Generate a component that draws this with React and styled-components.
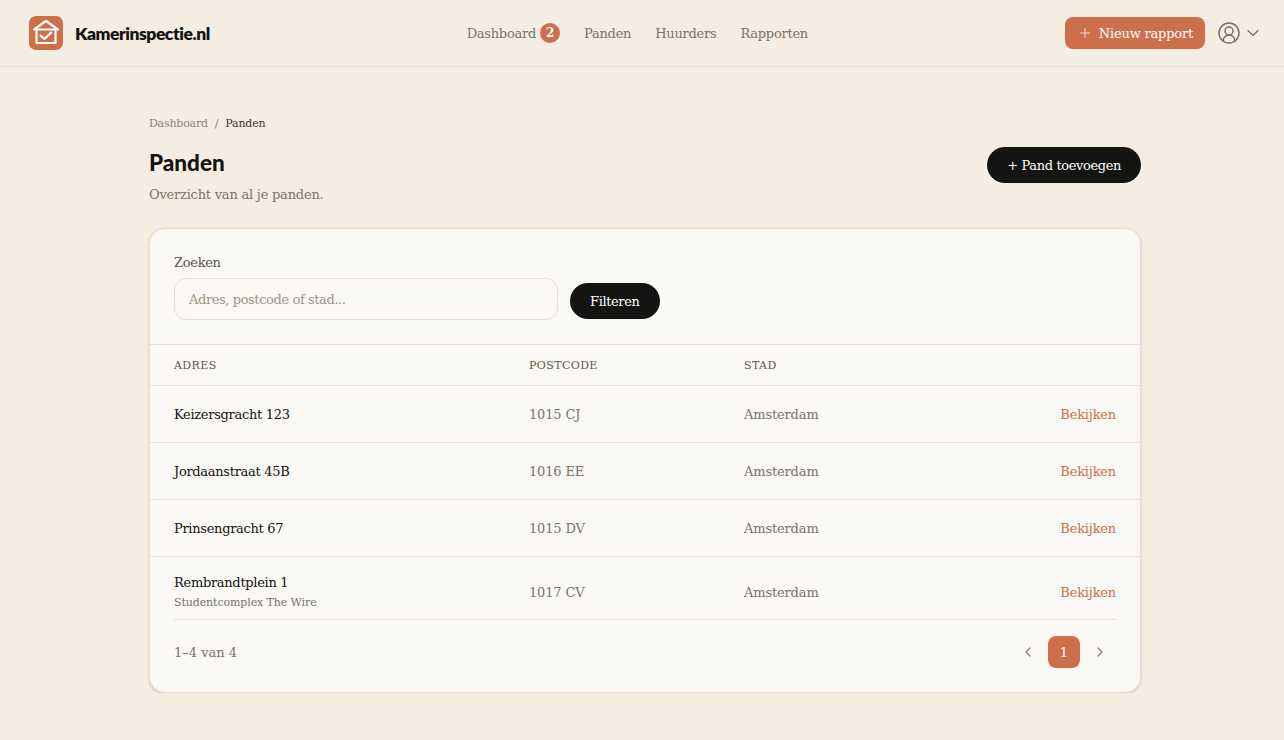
import React from "react";
import styled, { createGlobalStyle } from "styled-components";
import { ChevronLeft, ChevronRight, ChevronDown, Plus, CircleUserRound } from "lucide-react";

const bodyFont = `"DejaVu Serif", "Liberation Serif", serif`;
const headFont = `"Lato", "Open Sans", sans-serif`;

const GlobalStyle = createGlobalStyle`
  html, body {
    margin: 0;
    background: #f4ede2;
    font-family: ${bodyFont};
    color: #141412;
  }
  * {
    box-sizing: border-box;
  }
`;

const Header = styled.header`
  display: flex;
  justify-content: space-between;
  align-items: center;
  height: 67px;
  padding: 0 21px 0 29px;
  border-bottom: 1px solid #e9dfd1;
`;

const Brand = styled.div`
  display: flex;
  align-items: center;
  gap: 12px;
`;

const BrandName = styled.span`
  font-family: ${headFont};
  font-weight: 800;
  font-size: 17.5px;
  letter-spacing: -0.45px;
`;

const Nav = styled.nav`
  display: flex;
  align-items: center;
  gap: 24px;
`;

const NavLink = styled.a`
  display: flex;
  align-items: center;
  gap: 4px;
  font-size: 13px;
  letter-spacing: -0.25px;
  color: #78746a;
`;

const NavBadge = styled.span`
  display: flex;
  align-items: center;
  justify-content: center;
  width: 20px;
  height: 20px;
  border-radius: 50%;
  background: #cd6f4b;
  color: #fff;
  font-size: 12px;
  font-weight: 700;
`;

const HeaderActions = styled.div`
  display: flex;
  align-items: center;
  gap: 12px;
`;

const ReportButton = styled.button`
  display: flex;
  align-items: center;
  gap: 6px;
  height: 32px;
  padding: 0 12px;
  border: 0;
  border-radius: 8px;
  background: #cd6f4b;
  color: #fff;
  font-family: ${bodyFont};
  font-size: 13px;
  letter-spacing: -0.2px;
`;

const UserMenu = styled.div`
  display: flex;
  align-items: center;
  gap: 2px;
  color: #77716a;
`;

const Main = styled.main`
  width: 992px;
  margin-left: 149px;
  padding-top: 48px;
`;

const Breadcrumb = styled.div`
  display: flex;
  gap: 7px;
  height: 16px;
  align-items: center;
  font-size: 11px;
  letter-spacing: -0.2px;
  color: #8a8478;
`;

const Current = styled.span`
  color: #3a3832;
`;

const TitleRow = styled.div`
  display: flex;
  align-items: flex-start;
  justify-content: space-between;
  margin-top: 16px;
`;

const Title = styled.h1`
  margin: 0;
  font-family: ${headFont};
  font-weight: 900;
  font-size: 22.5px;
  line-height: 32px;
`;

const Subtitle = styled.p`
  margin: 6px 0 0;
  font-size: 13px;
  line-height: 20px;
  letter-spacing: -0.22px;
  color: #78746a;
`;

const DarkButton = styled.button`
  height: 36px;
  padding: 0 20px;
  margin-bottom: ${(p) => (p.$raised ? "1px" : "0")};
  border: 0;
  border-radius: 18px;
  background: #141412;
  color: #fff;
  font-family: ${bodyFont};
  font-size: 13px;
  letter-spacing: -0.38px;
`;

const Card = styled.section`
  margin-top: 23px;
  background: #faf8f4;
  border: 1px solid #e9dfd1;
  border-radius: 16px;
  box-shadow: 0 1px 3px rgba(60, 45, 25, 0.2);
`;

const FilterBar = styled.form`
  display: flex;
  align-items: flex-end;
  gap: 12px;
  height: 116px;
  padding: 24px;
  border-bottom: 1px solid #e9dfd1;
`;

const Field = styled.label`
  display: flex;
  flex-direction: column;
  gap: 8px;
  font-size: 13px;
  letter-spacing: -0.3px;
  color: #5c574e;
`;

const SearchInput = styled.input`
  width: 384px;
  height: 42px;
  padding: 0 14px;
  border: 1px solid #e9dfd1;
  border-radius: 12px;
  background: #faf8f4;
  font-family: ${bodyFont};
  font-size: 13px;
  letter-spacing: -0.4px;

  &::placeholder {
    color: #9a958b;
    opacity: 1;
  }
`;

const Row = styled.div`
  display: grid;
  grid-template-columns: 355px 215px 1fr auto;
  align-items: center;
  height: ${(p) => p.$height}px;
  padding: ${(p) => (p.$last ? "8px 24px 0" : "0 24px")};
  border-bottom: ${(p) => (p.$last ? "0" : "1px solid #e9dfd1")};
`;

const HeadCell = styled.span`
  font-size: 11px;
  letter-spacing: 0.4px;
  color: #5c574e;
`;

const Address = styled.div`
  font-size: 13px;
  letter-spacing: -0.3px;
  color: #141412;
`;

const Note = styled.div`
  margin-top: 6px;
  font-size: 11px;
  letter-spacing: -0.1px;
  color: #78746a;
`;

const Cell = styled.span`
  font-size: 13px;
  letter-spacing: -0.15px;
  color: #78746a;
`;

const ViewLink = styled.a`
  font-size: 13px;
  letter-spacing: -0.2px;
  color: #cd6f4b;
`;

const Footer = styled.div`
  display: flex;
  align-items: center;
  justify-content: space-between;
  margin: 0 24px;
  padding: 16px 0 24px;
  border-top: 1px solid #e9dfd1;
`;

const Count = styled.span`
  font-size: 13px;
  color: #78746a;
`;

const Pager = styled.div`
  display: flex;
  align-items: center;
  gap: 4px;
`;

const PageArrow = styled.span`
  display: flex;
  align-items: center;
  justify-content: center;
  width: 32px;
  height: 32px;
  color: #8a8478;
`;

const PageNumber = styled.span`
  display: flex;
  align-items: center;
  justify-content: center;
  width: 32px;
  height: 32px;
  border-radius: 8px;
  background: #cd6f4b;
  color: #fff;
  font-size: 13px;
`;

const properties = [
  { address: "Keizersgracht 123", postcode: "1015 CJ", city: "Amsterdam" },
  { address: "Jordaanstraat 45B", postcode: "1016 EE", city: "Amsterdam" },
  { address: "Prinsengracht 67", postcode: "1015 DV", city: "Amsterdam" },
  { address: "Rembrandtplein 1", note: "Studentcomplex The Wire", postcode: "1017 CV", city: "Amsterdam" },
];

function Logo() {
  return (
    <svg width="34" height="34" viewBox="0 0 34 34" fill="none">
      <rect width="34" height="34" rx="7" fill="#cd6f4b" />
      <path d="M5 13.5 17 5l12 8.5z" stroke="#fff" strokeWidth="2.2" strokeLinejoin="round" />
      <path d="M7.5 13.5V27h19V13.5" stroke="#fff" strokeWidth="2.2" strokeLinejoin="round" />
      <path d="M11.5 19.5l3.8 3.5 7-6.5" stroke="#fff" strokeWidth="2.2" strokeLinecap="round" strokeLinejoin="round" />
    </svg>
  );
}

export default function App() {
  return (
    <>
      <GlobalStyle />
      <Header>
        <Brand>
          <Logo />
          <BrandName>Kamerinspectie.nl</BrandName>
        </Brand>
        <Nav>
          <NavLink>
            Dashboard <NavBadge>2</NavBadge>
          </NavLink>
          <NavLink>Panden</NavLink>
          <NavLink>Huurders</NavLink>
          <NavLink>Rapporten</NavLink>
        </Nav>
        <HeaderActions>
          <ReportButton>
            <Plus size={16} strokeWidth={1.5} color="#f3d9cc" />
            Nieuw rapport
          </ReportButton>
          <UserMenu>
            <CircleUserRound size={24} strokeWidth={1.5} />
            <ChevronDown size={20} strokeWidth={1.5} />
          </UserMenu>
        </HeaderActions>
      </Header>
      <Main>
        <Breadcrumb>
          <span>Dashboard</span>
          <span>/</span>
          <Current>Panden</Current>
        </Breadcrumb>
        <TitleRow>
          <div>
            <Title>Panden</Title>
            <Subtitle>Overzicht van al je panden.</Subtitle>
          </div>
          <DarkButton>+ Pand toevoegen</DarkButton>
        </TitleRow>
        <Card>
          <FilterBar>
            <Field>
              Zoeken
              <SearchInput placeholder="Adres, postcode of stad..." />
            </Field>
            <DarkButton type="button" $raised>
              Filteren
            </DarkButton>
          </FilterBar>
          <Row $height={41}>
            <HeadCell>ADRES</HeadCell>
            <HeadCell>POSTCODE</HeadCell>
            <HeadCell>STAD</HeadCell>
          </Row>
          {properties.map((p, i) => (
            <Row key={p.address} $height={p.note ? 62 : 57} $last={i === properties.length - 1}>
              <div>
                <Address>{p.address}</Address>
                {p.note && <Note>{p.note}</Note>}
              </div>
              <Cell>{p.postcode}</Cell>
              <Cell>{p.city}</Cell>
              <ViewLink>Bekijken</ViewLink>
            </Row>
          ))}
          <Footer>
            <Count>1–4 van 4</Count>
            <Pager>
              <PageArrow>
                <ChevronLeft size={16} strokeWidth={2} />
              </PageArrow>
              <PageNumber>1</PageNumber>
              <PageArrow>
                <ChevronRight size={16} strokeWidth={2} />
              </PageArrow>
            </Pager>
          </Footer>
        </Card>
      </Main>
    </>
  );
}
